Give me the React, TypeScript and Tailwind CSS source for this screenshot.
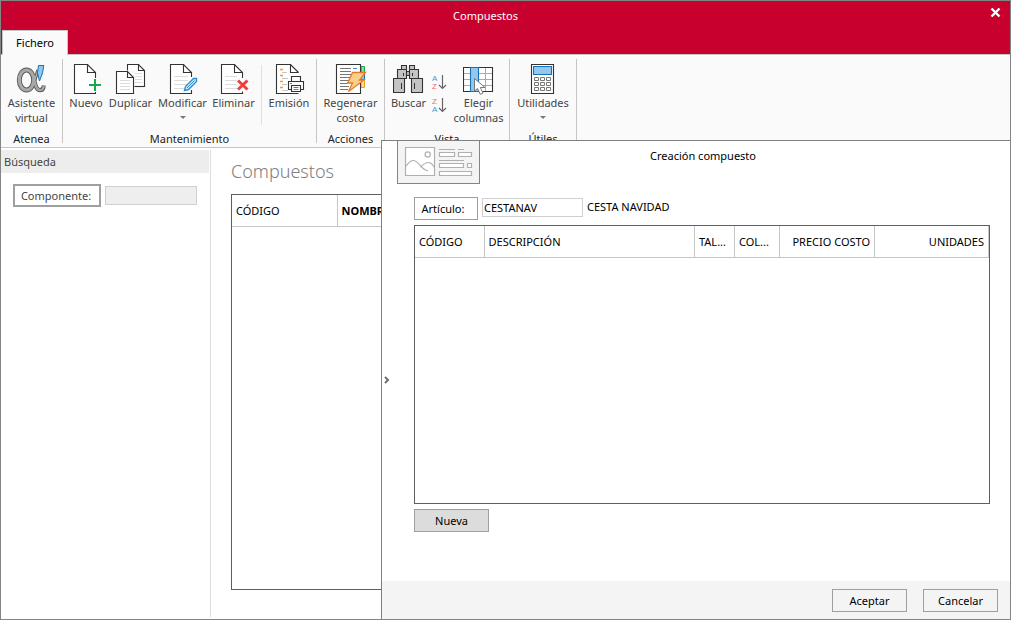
import type { ReactNode } from "react";

const INK = "#333333";

function Icon({ children, w = 32, h = 32 }: { children: ReactNode; w?: number; h?: number }) {
  return (
    <svg width={w} height={h} viewBox={`0 0 ${w} ${h}`} fill="none" aria-hidden="true" className="block shrink-0">
      {children}
    </svg>
  );
}

function GreyLines({ x, w, ys }: { x: number; w: number; ys: number[] }) {
  return (
    <>
      {ys.map((y) => (
        <path key={y} d={`M${x} ${y}h${w}`} stroke="#dcdcdc" />
      ))}
    </>
  );
}

function AlphaShape({ color, grow }: { color: string; grow: number }) {
  return (
    <g stroke={color}>
      <ellipse cx="10.500" cy="17" rx="7.200" ry="10" strokeWidth={3.2 + grow} />
      <path d="M22 7C20 13 18.500 20 14 26" strokeWidth={1.6 + grow} />
      <path d="M17.500 12C18.500 19 19.500 27.200 24 27.200C26.800 27.200 27.600 25 27.800 22.500" strokeWidth={2.2 + grow} />
    </g>
  );
}

function AlphaIcon() {
  return (
    <Icon>
      <AlphaShape color="#5a5a5a" grow={1.8} />
      <AlphaShape color="#a8a8a8" grow={0} />
      <path d="M22.500 2.500H27.800L26.500 10L23.500 18L21.500 10Z" fill="#91c8f0" stroke="#1a6fb5" />
    </Icon>
  );
}

function NewIcon() {
  return (
    <Icon>
      <path d="M25.500 15V9.500L17.500 1.500H4.500V30.500H25.500V29" fill="#fff" stroke={INK} strokeWidth="1.100" />
      <path d="M17.500 1.500V9.500H25.500" stroke={INK} strokeWidth="1.100" />
      <path d="M25 16V28M19 22H31" stroke="#16a750" strokeWidth="2" />
    </Icon>
  );
}

function DuplicateIcon() {
  return (
    <Icon>
      <path d="M12.500 1.500H23.500L29.500 7.500V23.500H12.500Z" fill="#fff" stroke={INK} strokeWidth="1.100" />
      <path d="M23.500 1.500V7.500H29.500" stroke={INK} strokeWidth="1.100" />
      <GreyLines x={19} w={8} ys={[10.5, 13.5, 16.5, 19.5]} />
      <path d="M-.5 7.500H20V31H-.5Z" fill="#fafafa" />
      <path d="M19.500 23.500H29.500" stroke={INK} strokeWidth="1.100" />
      <path d="M1.500 8.500H12.500L18.500 14.500V30.500H1.500Z" fill="#fff" stroke={INK} strokeWidth="1.100" />
      <path d="M12.500 8.500V14.500H18.500" stroke={INK} strokeWidth="1.100" />
      <GreyLines x={5} w={10} ys={[17.5, 20.5, 23.5, 26.5]} />
    </Icon>
  );
}

function EditIcon() {
  return (
    <Icon>
      <path d="M24.500 14V9.500L16.500 1.500H3.500V30.500H24.500V27" fill="#fff" stroke={INK} strokeWidth="1.100" />
      <path d="M16.500 1.500V9.500H24.500" stroke={INK} strokeWidth="1.100" />
      <GreyLines x={7} w={14} ys={[13.5, 17.5, 21.5, 25.5]} />
      <path d="M17.500 27.500L18.500 23.500L26.500 15.500H29.500V18.500L21.500 26.500Z" fill="#d3eafa" stroke="#2d8fce" strokeWidth="1.400" />
      <path d="M20 25L27.500 17.500" stroke="#2d8fce" />
    </Icon>
  );
}

function DeleteIcon() {
  return (
    <Icon>
      <path d="M24.500 15V9.500L16.500 1.500H3.500V30.500H24.500V28.500" fill="#fff" stroke={INK} strokeWidth="1.100" />
      <path d="M16.500 1.500V9.500H24.500" stroke={INK} strokeWidth="1.100" />
      <GreyLines x={7} w={12} ys={[13.5, 17.5, 21.5, 25.5]} />
      <path d="M20 17.500L29.500 26.500M29.500 17.500L20 26.500" stroke="#ee3f3f" strokeWidth="3" />
    </Icon>
  );
}

function PrintIcon() {
  return (
    <Icon>
      <path d="M17.500 1.500H3.500V30.500H25.500V9.500Z" fill="#fff" />
      <path d="M25.500 30.500H3.500V1.500H17.500L25.500 9.500" stroke={INK} strokeWidth="1.100" />
      <path d="M17.500 1.500V9.500H25.500" stroke={INK} strokeWidth="1.100" />
      <path d="M7 6.500h3M7 12.500h3M7 18.500h3M7 24.500h3" stroke="#f0a020" strokeWidth="1.400" />
      <path d="M9 9.500h5M9 15.500h6M9 21.500h5M9 27.500h6" stroke="#c8c8c8" />
      <path d="M18.500 18V13.500H27.500V18" fill="#fff" stroke={INK} strokeWidth="1.100" />
      <path d="M15.500 18.500H30.500V26.500H15.500Z" fill="#fff" stroke={INK} strokeWidth="1.100" />
      <path d="M18.500 22.500H27.500V28.500H18.500Z" fill="#fff" stroke={INK} strokeWidth="1.100" />
      <path d="M20.500 24.500h5M20.500 26.500h5" stroke="#777" />
      <path d="M17 20.500h2" stroke="#2d8fce" />
    </Icon>
  );
}

function RegenerateIcon() {
  return (
    <Icon>
      <path d="M26 3.500h3.500v6H26z" fill="#8fd6a4" stroke="#16a750" />
      <path d="M26 9.500h3.500v7H26z" fill="#91c8f0" stroke="#1a6fb5" />
      <path d="M26 17.500h3.500v7H26z" fill="#ffd9a0" stroke="#f0a020" />
      <path d="M1.500 1.500H25.500V30.500H1.500Z" fill="#fff" stroke={INK} strokeWidth="1.100" />
      <path d="M5 5.500h11M5 8.500h11M5 11.500h11M5 14.500h11M5 17.500h9M5 20.500h8M5 23.500h9M5 26.500h8" stroke="#777" />
      <path d="M18 5.500h4" stroke="#2d8fce" />
      <path d="M17.500 9.500H30.500L24.500 17H29L13.500 28.500L17.500 20H12.700Z" fill="#f9d08a" stroke="#e8792b" strokeWidth="1.300" />
    </Icon>
  );
}

function BinocularsIcon() {
  return (
    <Icon>
      <g fill="#c4c4c4" stroke={INK} strokeWidth="1.100">
        <path d="M13.500 8.500h3v4h-3z" />
        <path d="M8.500 2.500h5v4h-5zM16.500 2.500h5v4h-5z" />
        <path d="M4.500 6.500h9v9h-9zM16.500 6.500h9v9h-9z" />
        <path d="M.5 15.500h11v14H.5zM18.500 15.500h11v14h-11z" />
      </g>
      <path d="M10.500 10v3M19.500 10v3M8.500 20v6M21.500 20v6" stroke={INK} />
    </Icon>
  );
}

function SortIcon({ descending = false }: { descending?: boolean }) {
  return (
    <Icon w={16} h={16}>
      <text x="0" y="7" fontSize="8" fontFamily="Liberation Sans, sans-serif" fill={descending ? "#ee6e6e" : "#3d9bdc"}>
        {descending ? "Z" : "A"}
      </text>
      <text x="0" y="15" fontSize="8" fontFamily="Liberation Sans, sans-serif" fill={descending ? "#3d9bdc" : "#ee6e6e"}>
        {descending ? "A" : "Z"}
      </text>
      <path d="M10.500 1V14.500M7 11L10.500 14.500L14 11" stroke="#666" strokeWidth="1.200" />
    </Icon>
  );
}

function ColumnsIcon() {
  return (
    <Icon>
      <path d="M.5 4.500h29v24H.5z" fill="#fff" />
      <path d="M22.500 5v23M15.500 5v23M1 10.500h28M1 16.500h28M1 22.500h28" stroke="#aaa" />
      <path d="M.5 4.500h29v24H.5z" stroke={INK} strokeWidth="1.100" />
      <path d="M7.500 4.500h8v24h-8z" fill="#91c8f0" stroke="#1a6fb5" strokeWidth="1.100" />
      <path d="M11.500 15.500V28L14.500 25.500L17.300 31.300L20 30L17.300 24.500H22Z" fill="#fff" stroke="#777" />
    </Icon>
  );
}

function CalculatorIcon() {
  return (
    <Icon>
      <path d="M4.500 1.500h22v29h-22z" fill="#fff" stroke={INK} strokeWidth="1.100" />
      <path d="M6.500 3.500h18v8h-18z" fill="#91c8f0" stroke="#1a6fb5" strokeWidth="1.100" />
      <g stroke="#777">
        <path d="M7.500 14.500h4v3h-4zM13.500 14.500h4v3h-4zM19.500 14.500h4v3h-4z" />
        <path d="M7.500 19.500h4v3h-4zM13.500 19.500h4v3h-4zM19.500 19.500h4v3h-4z" />
        <path d="M7.500 24.500h4v3h-4zM13.500 24.500h4v3h-4zM19.500 24.500h4v3h-4z" />
      </g>
    </Icon>
  );
}

function FormThumbnail() {
  return (
    <div className="flex h-[43px] w-[83px] shrink-0 border border-t-0 border-[#848484] bg-[#f4f4f4]">
      <Icon w={81} h={42}>
        <g stroke="#b0b0b0" strokeWidth="1.200">
          <path d="M7.500 6.500h29v28h-29z" fill="#fff" />
          <circle cx="29.700" cy="13.500" r="2.600" />
          <path d="M7.500 25.500C10 23 11.500 19.500 15 19.500C19 19.500 21 23.500 23.500 26C26 28.500 27.500 29.500 30 30" />
          <path d="M22.500 26C25 23.500 27.500 21.500 30.500 21.500C33.500 21.500 35 24 36.500 26.500" />
          <path d="M41 8.500h16M60 8.500h6M41 19.500h25" />
          <path d="M41.500 11.500h15v4h-15zM60.500 11.500h13v4h-13zM41.500 22.500h24v4h-24zM69.500 22.500h4v4h-4zM41.500 30.500h32v4h-32z" fill="#fff" />
        </g>
      </Icon>
    </div>
  );
}

function Caret() {
  return (
    <span className="flex h-[15px] items-center justify-center">
      <Icon w={6} h={3}>
        <path d="M0 0H6L3 3Z" fill="#777" />
      </Icon>
    </span>
  );
}

function RibbonButton({
  icon,
  label,
  second,
  caret,
  width,
}: {
  icon: ReactNode;
  label: string;
  second?: string;
  caret?: boolean;
  width: string;
}) {
  return (
    <button type="button" className={`flex shrink-0 flex-col items-center text-[#444] ${width}`}>
      {icon}
      <span className="whitespace-nowrap">{label}</span>
      {second && <span className="whitespace-nowrap">{second}</span>}
      {caret && <Caret />}
    </button>
  );
}

function RibbonGroup({ title, children }: { title: string; children: ReactNode }) {
  return (
    <>
      <section aria-label={title} className="flex shrink-0 flex-col justify-between pt-2 pb-px">
        <div className="flex">{children}</div>
        <h2 className="text-center text-[#222]">{title}</h2>
      </section>
      <div className="my-1 w-px shrink-0 bg-[#c6c6c6]" />
    </>
  );
}

function Ribbon() {
  return (
    <div className="flex h-[94px] shrink-0 border-y border-[#c6c6c6] bg-[#fafafa]">
      <RibbonGroup title="Atenea">
        <RibbonButton icon={<AlphaIcon />} label="Asistente" second="virtual" width="w-[61px]" />
      </RibbonGroup>
      <RibbonGroup title="Mantenimiento">
        <div className="flex pr-1 pl-[3px]">
          <RibbonButton icon={<NewIcon />} label="Nuevo" width="w-10" />
          <RibbonButton icon={<DuplicateIcon />} label="Duplicar" width="w-[49px]" />
          <RibbonButton icon={<EditIcon />} label="Modificar" caret width="w-[55px]" />
          <RibbonButton icon={<DeleteIcon />} label="Eliminar" width="w-[47px]" />
        </div>
        <div className="mt-[2px] h-[60px] w-px bg-[#e0e0e0]" />
        <RibbonButton icon={<PrintIcon />} label="Emisión" width="w-[54px]" />
      </RibbonGroup>
      <RibbonGroup title="Acciones">
        <RibbonButton icon={<RegenerateIcon />} label="Regenerar" second="costo" width="w-[67px]" />
      </RibbonGroup>
      <RibbonGroup title="Vista">
        <RibbonButton icon={<BinocularsIcon />} label="Buscar" width="w-[47px]" />
        <div className="flex w-4 flex-col gap-[7px] pt-[11px]">
          <button type="button" aria-label="Orden ascendente">
            <SortIcon />
          </button>
          <button type="button" aria-label="Orden descendente">
            <SortIcon descending />
          </button>
        </div>
        <RibbonButton icon={<ColumnsIcon />} label="Elegir" second="columnas" width="w-[61px]" />
      </RibbonGroup>
      <RibbonGroup title="Útiles">
        <RibbonButton icon={<CalculatorIcon />} label="Utilidades" caret width="w-[66px]" />
      </RibbonGroup>
    </div>
  );
}

function SearchPanel() {
  return (
    <aside className="my-[2px] flex w-[210px] shrink-0 flex-col border-r border-[#dcdcdc] pr-px">
      <h2 className="h-[23px] bg-[#ededed] pl-[3px] leading-[23px] text-[#444]">Búsqueda</h2>
      <div className="flex items-center gap-1 px-3 pt-[11px]">
        <button
          type="button"
          id="componente-label"
          className="h-[23px] w-[88px] shrink-0 border-2 border-[#9f9f9f] bg-white pr-[2px] text-[#444]"
        >
          Componente:
        </button>
        <input aria-labelledby="componente-label" className="h-[19px] w-[92px] border border-[#d0d0d0] bg-[#eeeeee] px-[2px]" />
      </div>
    </aside>
  );
}

function CompoundsList() {
  return (
    <main className="flex min-w-0 flex-1 flex-col px-5 pb-[29px]">
      <h1 className="mt-[9px] mb-[9px] text-[18px] leading-7 font-light text-[#808080]">Compuestos</h1>
      <div className="flex-1 border border-[#5f5f5f]">
        <table className="w-full table-fixed border-collapse">
          <thead>
            <tr className="h-[31px] border-b border-[#c6c6c6] text-left">
              <th className="w-[105px] border-r border-[#c6c6c6] px-1 pt-px pb-0 font-normal">CÓDIGO</th>
              <th className="px-1 pt-px pb-0 font-bold">NOMBRE</th>
            </tr>
          </thead>
        </table>
      </div>
    </main>
  );
}

const columns = [
  { name: "CÓDIGO", style: "w-[69px] text-left" },
  { name: "DESCRIPCIÓN", style: "text-left" },
  { name: "TAL...", style: "w-10 text-left" },
  { name: "COL...", style: "w-[45px] text-left" },
  { name: "PRECIO COSTO", style: "w-[95px] text-right" },
  { name: "UNIDADES", style: "w-[114px] text-right" },
];

const dialogButton = "h-[23px] w-[75px] border border-[#9f9f9f] text-black";

function CreateDialog() {
  return (
    <div
      role="dialog"
      aria-labelledby="dialog-title"
      className="absolute top-[139px] right-0 bottom-0 left-[380px] flex flex-col border-t border-l border-[#808080] bg-white text-black"
    >
      <div className="relative flex shrink-0 pl-[15px]">
        <FormThumbnail />
        <h2 id="dialog-title" className="absolute inset-x-0 top-[7px] pl-[14px] text-center">
          Creación compuesto
        </h2>
      </div>
      <div className="flex flex-1 flex-col pt-[13px] pr-5 pb-[49px] pl-8">
        <div className="flex items-start gap-1">
          <button type="button" id="articulo-label" className="h-[23px] w-16 border border-[#9f9f9f] bg-white pr-[6px]">
            Artículo:
          </button>
          <input
            aria-labelledby="articulo-label"
            defaultValue="CESTANAV"
            className="mt-px h-[19px] w-[101px] border border-[#d0d0d0] bg-white px-px pb-px"
          />
          <span className="mt-[2px]">CESTA NAVIDAD</span>
        </div>
        <div className="mt-[5px] flex-1 border border-[#5f5f5f]">
          <table className="w-full table-fixed border-collapse">
            <thead>
              <tr className="h-[31px] border-b border-[#c6c6c6]">
                {columns.map((c) => (
                  <th
                    key={c.name}
                    className={`border-r border-[#c6c6c6] px-1 pt-px pb-0 font-normal whitespace-nowrap ${c.style}`}
                  >
                    {c.name}
                  </th>
                ))}
              </tr>
            </thead>
          </table>
        </div>
        <button type="button" className={`mt-[5px] shrink-0 bg-[#dcdcdc] ${dialogButton}`}>
          Nueva
        </button>
      </div>
      <div className="flex h-[38px] shrink-0 items-center justify-end gap-4 bg-[#f4f4f4] pr-3">
        <button type="button" className={dialogButton}>
          Aceptar
        </button>
        <button type="button" className={dialogButton}>
          Cancelar
        </button>
      </div>
      <button type="button" aria-label="Contraer panel" className="absolute top-1/2 left-[2px] -translate-y-1/2">
        <Icon w={6} h={8}>
          <path d="M1 1L4 4L1 7" stroke="#707070" strokeWidth="2" />
        </Icon>
      </button>
    </div>
  );
}

export default function App() {
  return (
    <div className="relative flex h-screen flex-col overflow-hidden border border-[#848484] bg-white font-['Noto_Sans',sans-serif] text-[11px] leading-[15px]">
      <header className="relative flex shrink-0 flex-col bg-[#c8002d]">
        <div className="flex h-[29px] items-center justify-center pr-10">
          <span className="text-white">Compuestos</span>
        </div>
        <button type="button" aria-label="Cerrar" className="absolute top-[6px] right-[9px]">
          <Icon w={11} h={11}>
            <path d="M1.500 1.500L9.500 9.500M9.500 1.500L1.500 9.500" stroke="#fff" strokeWidth="2.400" />
          </Icon>
        </button>
        <nav className="flex pl-px">
          <button
            type="button"
            className="relative z-10 -mb-px h-[25px] w-[66px] border border-b-0 border-[#c6c6c6] bg-[#fafafa] pb-[2px] text-black"
          >
            Fichero
          </button>
        </nav>
      </header>
      <Ribbon />
      <div className="flex min-h-0 flex-1">
        <SearchPanel />
        <CompoundsList />
      </div>
      <CreateDialog />
    </div>
  );
}
